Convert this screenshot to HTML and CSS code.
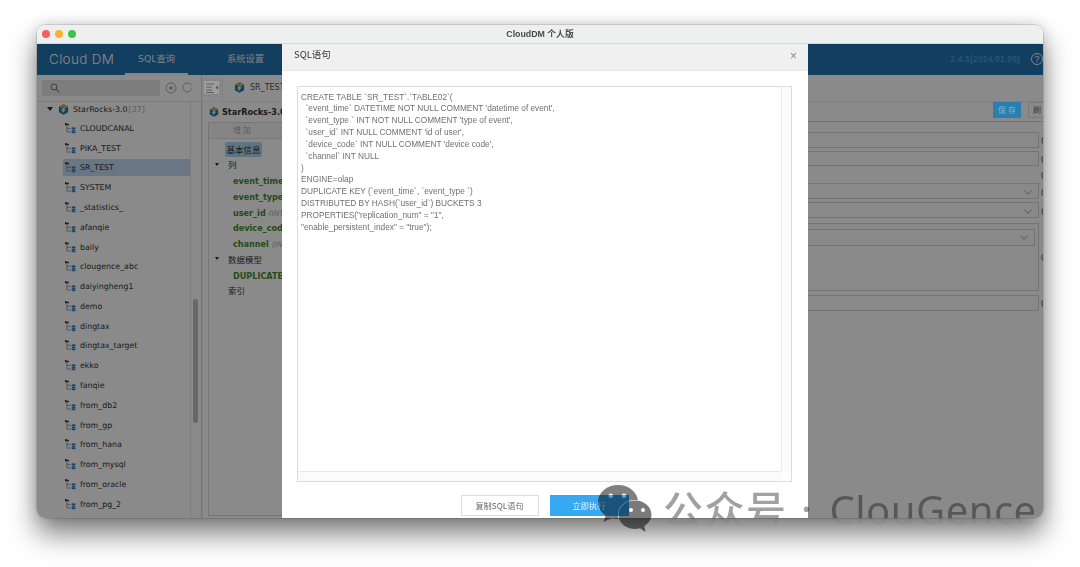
FILE: index.html
```html
<!DOCTYPE html>
<html lang="zh-CN">
<head>
<meta charset="utf-8">
<title>CloudDM 个人版</title>
<link rel="stylesheet" href="styles.css">
</head>
<body>
<svg class="defs" width="0" height="0" aria-hidden="true">
  <defs>
    <symbol id="schema" viewBox="0 0 14 14">
      <path d="M0 0h1.600l.6.8H5v2H0z" fill="#3a3a3a"/>
      <path d="M2.500 3v8.500h5M2.500 6.800h5" fill="none" stroke="#777" stroke-width=".9"/>
      <rect x="8.600" y="5.600" width="4.600" height="2.400" fill="#2a7cc4"/>
      <rect x="8.600" y="8.500" width="4.600" height="1.600" fill="#2a7cc4"/>
      <rect x="8.600" y="10.600" width="4.600" height="2.400" fill="#2a7cc4"/>
    </symbol>
    <symbol id="rocks" viewBox="0 0 12 12">
      <path d="M6 .3 11 3v6l-5 2.800L1 9V3z" fill="#1d7cab"/>
      <path d="M6 .3 11 3 8.400 4.600 6 3.200 3.600 4.600 1 3z" fill="#e3a432"/>
      <path d="M7.300 3.600 4.600 6.400h2.500L5 9.200" fill="none" stroke="#f2f2f2" stroke-width="1.300"/>
    </symbol>
    <mask id="cutb1" maskUnits="userSpaceOnUse" x="0" y="0" width="56" height="48">
      <rect width="56" height="48" fill="#fff"/>
      <path d="M38 16.500c-9.500 0-16.500 6.300-16.500 14.300S28.500 45 38 45c1.800 0 3.300-.3 5-.8l5.500 3.800-1.200-6c4-2.700 7.200-6.300 7.200-11.200 0-8-7-14.300-16.500-14.300z" fill="#000" stroke="#000" stroke-width="1.200"/>
    </mask>
  </defs>
</svg>
<div class="window">
  <header class="titlebar">
    <div class="lights"><i class="red"></i><i class="yellow"></i><i class="green"></i></div>
    <div class="wintitle">CloudDM 个人版</div>
    <div class="titlepad"></div>
  </header>
  <div class="app">
    <nav class="topnav">
      <div class="logo">Cloud DM</div>
      <div class="navtab active">SQL查询</div>
      <div class="navtab">系统设置</div>
      <div class="spacer"></div>
      <div class="version">2.4.1(2024.01.05)</div>
      <div class="help">?</div>
    </nav>
    <div class="workspace">
      <aside class="sidebar">
        <div class="searchrow">
          <div class="search">
            <svg width="10" height="10" viewBox="0 0 10 10"><circle cx="4" cy="4" r="3" fill="none" stroke="#777" stroke-width="1"/><path d="m6.300 6.300 3 3" stroke="#777" stroke-width="1.100"/></svg>
          </div>
          <svg class="tool" width="12" height="12" viewBox="0 0 12 12"><circle cx="6" cy="6" r="5" fill="none" stroke="#a8a8a8"/><circle cx="6" cy="6" r="1.800" fill="#a8a8a8"/></svg>
          <svg class="tool" width="11" height="11" viewBox="0 0 12 12"><path d="M10.400 3.600A5 5 0 1 0 11 6" fill="none" stroke="#a8a8a8"/></svg>
        </div>
        <div class="treewrap">
          <div class="tree">
            <div class="root"><span class="caret"></span><svg class="rocks"><use href="#rocks"/></svg><span>StarRocks-3.0</span><em>[37]</em></div>
            <div class="node"><svg class="schema"><use href="#schema"/></svg>CLOUDCANAL</div>
            <div class="node"><svg class="schema"><use href="#schema"/></svg>PIKA_TEST</div>
            <div class="node selected"><svg class="schema"><use href="#schema"/></svg>SR_TEST</div>
            <div class="node"><svg class="schema"><use href="#schema"/></svg>SYSTEM</div>
            <div class="node"><svg class="schema"><use href="#schema"/></svg>_statistics_</div>
            <div class="node"><svg class="schema"><use href="#schema"/></svg>afanqie</div>
            <div class="node"><svg class="schema"><use href="#schema"/></svg>baily</div>
            <div class="node"><svg class="schema"><use href="#schema"/></svg>clougence_abc</div>
            <div class="node"><svg class="schema"><use href="#schema"/></svg>daiyingheng1</div>
            <div class="node"><svg class="schema"><use href="#schema"/></svg>demo</div>
            <div class="node"><svg class="schema"><use href="#schema"/></svg>dingtax</div>
            <div class="node"><svg class="schema"><use href="#schema"/></svg>dingtax_target</div>
            <div class="node"><svg class="schema"><use href="#schema"/></svg>ekko</div>
            <div class="node"><svg class="schema"><use href="#schema"/></svg>fanqie</div>
            <div class="node"><svg class="schema"><use href="#schema"/></svg>from_db2</div>
            <div class="node"><svg class="schema"><use href="#schema"/></svg>from_gp</div>
            <div class="node"><svg class="schema"><use href="#schema"/></svg>from_hana</div>
            <div class="node"><svg class="schema"><use href="#schema"/></svg>from_mysql</div>
            <div class="node"><svg class="schema"><use href="#schema"/></svg>from_oracle</div>
            <div class="node"><svg class="schema"><use href="#schema"/></svg>from_pg_2</div>
          </div>
          <div class="vscroll"><div class="thumb"></div></div>
        </div>
      </aside>
      <main class="panel">
        <div class="tabbar">
          <div class="collapse"><svg width="14" height="10" viewBox="0 0 14 10"><path d="M1 1h8M1 4h6M1 7h6M1 9.500h8" stroke="#555" fill="none" stroke-width=".9"/><path d="M13 2.500v4L10.500 4.500z" fill="#555"/></svg></div>
          <div class="tab"><svg class="rocks"><use href="#rocks"/></svg><span>SR_TEST</span></div>
        </div>
        <div class="detail">
          <div class="detailhead">
            <div class="crumb"><svg class="rocks"><use href="#rocks"/></svg><span>StarRocks-3.0.</span></div>
            <div class="actions">
              <div class="save">保 存</div>
              <div class="refresh">刷 新</div>
            </div>
          </div>
          <div class="columns">
            <section class="outline">
              <div class="addbar"><span>增 加</span></div>
              <div class="outlinebody">
                <div class="pill">基本信息</div>
                <div class="group"><span class="caret small"></span>列</div>
                <div class="col">event_time <em>(DATETIME)</em></div>
                <div class="col">event_type <em>(INT)</em></div>
                <div class="col">user_id <em>(INT)</em></div>
                <div class="col">device_code <em>(INT)</em></div>
                <div class="col">channel <em>(INT)</em></div>
                <div class="group"><span class="caret small"></span>数据模型</div>
                <div class="col">DUPLICATE KEY</div>
                <div class="group plain">索引</div>
              </div>
            </section>
            <section class="form">
              <div class="field f1"><div class="box"></div><b>(</b></div>
              <div class="field f2"><div class="box"></div><b>(</b></div>
              <div class="field f3"><div class="nobox"></div><b>(</b></div>
              <div class="field f1"><div class="box sel"><span class="chev"></span></div><b>(</b></div>
              <div class="field f1"><div class="box sel"><span class="chev"></span></div><b>(</b></div>
              <div class="field big"><div class="box outer"><div class="box sel inner"><span class="chev"></span></div></div><b>(</b></div>
              <div class="field f1 last"><div class="box"></div><b>(</b></div>
            </section>
          </div>
        </div>
      </main>
    </div>
    <div class="backdrop"></div>
    <div class="modal">
      <div class="modalhead"><span>SQL语句</span><span class="close">×</span></div>
      <div class="modalbody">
        <div class="sqlbox">
          <div class="sqlrow">
            <pre class="sql">CREATE TABLE `SR_TEST`.`TABLE02`(
  `event_time` DATETIME NOT NULL COMMENT 'datetime of event',
  `event_type ` INT NOT NULL COMMENT 'type of event',
  `user_id` INT NULL COMMENT 'id of user',
  `device_code` INT NULL COMMENT 'device code',
  `channel` INT NULL
)
ENGINE=olap
DUPLICATE KEY (`event_time`, `event_type `)
DISTRIBUTED BY HASH(`user_id`) BUCKETS 3
PROPERTIES("replication_num" = "1",
"enable_persistent_index" = "true");</pre>
            <div class="sqlscroll"></div>
          </div>
          <div class="sqlhscroll"></div>
        </div>
        <div class="modalfoot">
          <div class="btn">复制SQL语句</div>
          <div class="btn primary">立即执行</div>
        </div>
      </div>
    </div>
  </div>
</div>
<div class="watermark">
  <svg class="wechat" width="56" height="48" viewBox="0 0 56 48">
    <path mask="url(#cutb1)" fill-rule="evenodd" fill="#000" fill-opacity=".5" d="M21 1C10 1 1 8.500 1 18c0 5.700 3 10.300 7.500 13.500L6.500 38l8-3.700c2 .5 4.400.7 6.500.7 11 0 20-7.500 20-17S32 1 21 1zM13.800 9.500a2.300 2.300 0 1 1 0 4.600 2.300 2.300 0 0 1 0-4.600zm13.200 0a2.300 2.300 0 1 1 0 4.600 2.300 2.300 0 0 1 0-4.600z"/>
    <path fill-rule="evenodd" fill="#000" fill-opacity=".52" d="M38 16.500c-9.500 0-16.500 6.300-16.500 14.300S28.500 45 38 45c1.800 0 3.300-.3 5-.8l5.500 3.800-1.200-6c4-2.700 7.200-6.300 7.200-11.200 0-8-7-14.300-16.500-14.300zM34 24a2 2 0 1 1 0 4 2 2 0 0 1 0-4zm12 0a2 2 0 1 1 0 4 2 2 0 0 1 0-4z"/>
  </svg>
  <div class="wmclip">
    <span class="wmcn">公众号</span><span class="wmdot">·</span><span class="wmen">ClouGence</span>
  </div>
</div>
</body>
</html>
```
FILE: styles.css
```css
* { box-sizing: border-box; }
html, body { margin: 0; height: 100%; background: #fff; overflow: hidden; }
body {
  padding: 25px 37px 49px;
  position: relative;
  font-family: "Liberation Sans", "Noto Sans CJK SC", sans-serif;
}
.defs { position: absolute; }

.window {
  height: 493px;
  border-radius: 8px;
  overflow: hidden;
  display: flex;
  flex-direction: column;
  box-shadow: 0 16px 28px rgba(0,0,0,.5), 0 0 14px rgba(0,0,0,.16), 0 0 0 .5px rgba(0,0,0,.22);
  background: #f7f7f7;
}
.titlebar {
  height: 18.500px;
  flex: none;
  background: #eef0ef;
  border-bottom: 1px solid #d8d8d8;
  display: flex;
  align-items: center;
  padding-left: 5px;
}
.lights { display: flex; gap: 5px; width: 34px; flex: none; }
.lights i { width: 8px; height: 8px; border-radius: 50%; display: block; flex: none; }
.red { background: #f6605a; }
.yellow { background: #fbb130; }
.green { background: #3cc447; }
.wintitle {
  flex: 1;
  text-align: center;
  font-size: 8.800px;
  font-weight: 700;
  color: #4a4a4a;
  filter: blur(.3px);
}
.titlepad { width: 39px; flex: none; }

.app { flex: 1; position: relative; display: flex; flex-direction: column; min-height: 0; filter: blur(.35px); }
.topnav {
  height: 31.500px;
  flex: none;
  background: #2272b0;
  display: flex;
  align-items: center;
  color: #fff;
  padding-left: 12px;
}
.logo { font-family: "Inter", "Liberation Sans", sans-serif; font-size: 13.500px; font-weight: 300; width: 76px; letter-spacing: .3px; color: #f4f4f4; white-space: nowrap; }
.navtab {
  font-family: "DejaVu Sans", "Noto Sans CJK SC", sans-serif;
  font-size: 9.300px;
  height: 100%;
  width: 63px;
  margin-right: 26px;
  display: flex;
  align-items: center;
  justify-content: center;
  color: #e6e6e6;
  border-bottom: 2px solid transparent;
}
.navtab.active { border-bottom-color: #f2f2f2; }
.spacer { flex: 1; }
.version { font-size: 8.600px; font-weight: 700; color: #3f9fd8; letter-spacing: .1px; margin-right: 11px; }
.help {
  width: 12px; height: 12px;
  border: 1px solid #f2f2f2;
  border-radius: 50%;
  font-size: 9px;
  line-height: 10px;
  text-align: center;
  color: #f2f2f2;
}

.workspace { flex: 1; display: flex; min-height: 0; overflow: hidden; }
.sidebar {
  width: 165px;
  flex: none;
  display: flex;
  flex-direction: column;
  border-right: 1px solid #d8d8d8;
  background: #fbfbfb;
}
.searchrow {
  height: 26.500px;
  flex: none;
  display: flex;
  align-items: center;
  padding-left: 5px;
  border-bottom: 1px solid #e2e2e2;
}
.search {
  width: 118px; height: 16px;
  background: #e4e4e4;
  margin-right: 5px;
  display: flex;
  align-items: center;
  padding-left: 8px;
}
.tool { margin-right: 5px; flex: none; }
.treewrap { flex: 1; display: flex; min-height: 0; overflow: hidden; }
.tree { flex: 1; min-width: 0; border-right: 1px solid #e4e4e4; }
.root {
  height: 15px;
  margin-bottom: 2px;
  display: flex;
  align-items: center;
  padding-left: 10px;
  font: 7.900px "DejaVu Sans", sans-serif;
  color: #333;
}
.root em { font-style: normal; color: #aaa; margin-left: 1px; }
.caret { width: 0; height: 0; border: 3px solid transparent; border-top: 4px solid #333; border-bottom: 0; margin-right: 5px; flex: none; }
.caret.small { border-width: 2.500px; border-top-width: 3px; border-bottom: 0; margin-right: 9px; margin-left: 6px; border-top-color: #333; }
.root .rocks { margin-right: 4px; }
.rocks { width: 11px; height: 11px; flex: none; }
.node {
  height: 19.790px;
  display: flex;
  align-items: center;
  margin-left: 26px;
  padding-left: 2px;
  font: 7.850px "DejaVu Sans", sans-serif;
  color: #333;
}
.node.selected { background: #c2d8f0; height: 17px; margin-top: 1.400px; margin-bottom: 1.390px; }
.schema { width: 11px; height: 11px; margin-right: 4px; flex: none; }
.vscroll { width: 10px; flex: none; position: relative; background: #fbfbfb; }
.thumb { position: absolute; left: 2px; top: 197px; width: 5px; height: 124px; border-radius: 3px; background: #bdbdbd; }

.panel { flex: 1; min-width: 0; display: flex; flex-direction: column; background: #fbfbfb; overflow: hidden; }
.tabbar {
  height: 26.500px;
  flex: none;
  display: flex;
  align-items: center;
  padding-left: 2px;
  background: #fbfbfb;
  border-bottom: 1px solid #ececec;
}
.collapse {
  position: relative;
  z-index: 1;
  width: 15px; height: 13px;
  background: #9d9d9d;
  box-shadow: 0 0 3px rgba(0,0,0,.12);
  display: flex;
  align-items: center;
  justify-content: center;
  margin-right: 3px;
  flex: none;
}
.tab { height: 100%; flex: 1; min-width: 0; display: flex; align-items: center; gap: 5px; padding-left: 11px; font: 8px "DejaVu Sans", sans-serif; color: #555; border-left: 1px solid #ececec; }
.detail { flex: 1; min-height: 0; display: flex; flex-direction: column; border-left: 1px solid #ececec; }
.detailhead { height: 20px; flex: none; display: flex; justify-content: space-between; }
.crumb { width: 80px; overflow: hidden; white-space: nowrap; display: flex; align-items: center; gap: 3px; padding-left: 6px; font: 700 8.100px "DejaVu Sans", sans-serif; color: #333; flex: none; }
.crumb .rocks { width: 10px; height: 10px; }
.actions { flex: 1; min-width: 0; display: flex; justify-content: flex-end; gap: 7px; margin-right: -13px; padding-top: .500px; border-bottom: 1px solid #cfcfcf; align-items: flex-start; }
.save { position: relative; z-index: 1; width: 28px; height: 16px; background: #2a7fae; color: #7fb5d5; font: 8px/15px "Noto Sans CJK SC", sans-serif; text-align: center; flex: none; }
.refresh { width: 28px; height: 16px; border: 1px solid #ddd; color: #666; font: 8px/13px "Noto Sans CJK SC", sans-serif; text-align: center; flex: none; }
.columns { flex: 1; display: flex; min-height: 0; padding-left: 5px; }
.outline { width: 74px; flex: none; border: 1px solid #d8d8d8; border-right: 0; display: flex; flex-direction: column; margin-bottom: 2px; overflow: hidden; }
.addbar { height: 16px; flex: none; background: #f3f3f3; border-bottom: 1px solid #ddd; font: 8px/13px "Noto Sans CJK SC", sans-serif; color: #aaa; padding-left: 24px; white-space: nowrap; }
.outlinebody { padding-top: 3px; font: 700 8.100px "DejaVu Sans", "Noto Sans CJK SC", sans-serif; }
.pill { margin-left: 16px; width: 37px; height: 15.700px; background: #a8d4f0; border-radius: 2px; font: 8.500px/15px "Noto Sans CJK SC", sans-serif; color: #333; text-align: center; }
.group { height: 15.800px; padding-bottom: 2px; display: flex; align-items: center; font: 8.500px "Noto Sans CJK SC", sans-serif; color: #333; white-space: nowrap; }
.group.plain { padding-left: 19px; }
.col { height: 15.800px; line-height: 17px; padding-left: 24px; color: #3f8a2e; white-space: nowrap; }
.col em { font-weight: 400; color: #aaa; font-size: 7.500px; }
.form { flex: 1; min-width: 0; display: flex; flex-direction: column; gap: 3px; padding-top: 10px; }
.field { display: flex; align-items: center; gap: 2px; flex: none; }
.f1 { height: 16px; }
.f2 { height: 15.500px; }
.f3 { height: 11px; }
.big { height: 68px; margin-top: 1.500px; }
.last { margin-top: 1px; }
.field b { font: 400 8px "Liberation Sans", sans-serif; color: #333; width: 2px; flex: none; overflow: hidden; }
.box { flex: 1; height: 100%; border: 1px solid #d4d4d4; background: #fafafa; position: relative; }
.nobox { flex: 1; }
.outer { padding: 5px 3px 0 20px; }
.inner { height: 17px; }
.chev { position: absolute; right: 7px; top: 3.500px; width: 6px; height: 6px; border-right: 1px solid #b0b0b0; border-bottom: 1px solid #b0b0b0; transform: rotate(45deg) scale(.9); }

.backdrop { position: absolute; inset: 0; background: rgba(0,0,0,.45); }
.modal {
  position: absolute;
  z-index: 2;
  left: 245px;
  top: 0;
  bottom: 0;
  width: 526px;
  background: #fff;
  display: flex;
  flex-direction: column;
  overflow: hidden;
}
.modalhead {
  height: 27px;
  flex: none;
  background: #f0f0f0;
  border-bottom: 1px solid #e6e6e6;
  display: flex;
  justify-content: space-between;
  align-items: center;
  padding: 0 11px 5px 12px;
  font: 9.500px "Noto Sans CJK SC", sans-serif;
  color: #333;
}
.close { font: 12px "Liberation Sans", sans-serif; color: #888; margin-top: 3px; }
.modalbody { flex: 1; min-height: 0; padding: 15px 16px 0 15px; display: flex; flex-direction: column; }
.sqlbox { height: 396px; flex: none; border: 1px solid #dcdcdc; display: flex; flex-direction: column; position: relative; }
.sqlrow { flex: 1; display: flex; min-height: 0; }
.sql {
  flex: 1;
  margin: 0;
  padding: 5px 3px 0;
  font: 8.300px/11.850px "Liberation Sans", sans-serif;
  color: #707070;
  white-space: pre;
  overflow: hidden;
}
.sqlscroll { width: 10px; flex: none; border-left: 1px solid #e8e8e8; background: #fbfbfb; }
.sqlhscroll { height: 10px; flex: none; border-top: 1px solid #e8e8e8; background: #fbfbfb; margin-right: 10px; }
.modalfoot { display: flex; justify-content: center; gap: 11px; padding-top: 13.500px; }
.btn { width: 78px; height: 21px; border: 1px solid #ddd; font: 8.200px/19px "Noto Sans CJK SC", sans-serif; color: #666; text-align: center; }
.btn.primary { background: #36a9f2; border-color: #36a9f2; color: #e8f4fd; width: 79px; }

.watermark {
  position: absolute;
  left: 597px;
  top: 484px;
  display: flex;
  align-items: flex-start;
  pointer-events: none;
}
.wmclip {
  margin-left: 10px;
  height: 42px;
  overflow: hidden;
  display: flex;
  align-items: flex-start;
  white-space: nowrap;
  color: rgba(0,0,0,.37);
  -webkit-mask-image: linear-gradient(#000 34px, rgba(0,0,0,.15) 34.500px, rgba(0,0,0,.05) 42px);
  mask-image: linear-gradient(#000 34px, rgba(0,0,0,.15) 34.500px, rgba(0,0,0,.05) 42px);
}
.wmcn { font: 500 40px/48px "Noto Sans CJK SC", sans-serif; width: 122px; letter-spacing: 1.500px; flex: none; }
.wmdot { font: 700 32px/50px "Noto Sans", sans-serif; margin-left: 17px; width: 27.500px; flex: none; }
.wmen { font: 40px/52px "Noto Sans", sans-serif; letter-spacing: .5px; flex: none; }
```
